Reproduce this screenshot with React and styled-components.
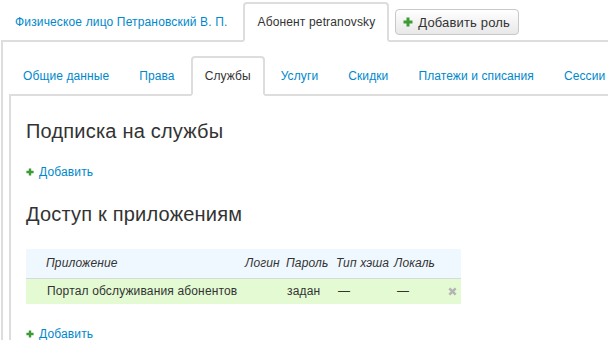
import React from "react";
import styled, { createGlobalStyle } from "styled-components";

const GlobalStyle = createGlobalStyle`
  html, body {
    margin: 0;
    padding: 0;
    overflow: hidden;
    background: #fff;
    font-family: "Liberation Sans", Arial, sans-serif;
    color: #333;
    letter-spacing: 0.15px;
  }
`;

const Page = styled.div`
  width: 760px;
  padding: 2px 0 0 1px;
`;

const TabBar = styled.div`
  display: flex;
  align-items: flex-start;
  margin-bottom: -2px;
  position: relative;
  z-index: 1;
`;

const Tab = styled.div`
  border: 2px solid transparent;
  border-radius: 4px 4px 0 0;
  padding: 10px 12px;
  line-height: 16px;
  font-size: 12px;
  margin-right: 2px;
  white-space: nowrap;
  letter-spacing: ${(p) => (p.$tight ? "0.1px" : "inherit")};
  color: ${(p) => (p.$active ? "#333" : "#0088cc")};
  background: ${(p) => (p.$active ? "#fff" : "transparent")};
  border-color: ${(p) => (p.$active ? "#ddd #ddd #fff #ddd" : "transparent")};
`;

const RoleButton = styled.button`
  margin: 7px 0 0 4px;
  height: 26px;
  padding: 0 8px 0 7px;
  display: flex;
  align-items: center;
  gap: 5px;
  font-family: inherit;
  letter-spacing: inherit;
  font-size: 13px;
  color: #333;
  border: 1px solid #c8c8c8;
  border-radius: 4px;
  background: linear-gradient(#ffffff, #e8e8e8);
  white-space: nowrap;
`;

const Panel = styled.div`
  border: 2px solid #ddd;
  border-right-color: transparent;
  padding: ${(p) => p.$pad};
  min-height: 400px;
`;

const Heading = styled.h2`
  margin: ${(p) => p.$mt || 0}px 0 0;
  font-size: 20px;
  line-height: 24px;
  font-weight: normal;
  letter-spacing: 0.2px;
  color: #333;
`;

const AddLink = styled.div`
  margin-top: ${(p) => p.$mt}px;
  display: flex;
  align-items: center;
  gap: 5px;
  font-size: 12px;
  line-height: 18px;
  color: #0088cc;
`;

const Table = styled.table`
  margin-top: 23px;
  width: 435px;
  border-collapse: collapse;
  table-layout: fixed;
  font-size: 12px;
`;

const HeadRow = styled.tr`
  background: #eff8fe;
  height: 29px;
  border-bottom: 1px solid #d3dbe0;
`;

const BodyRow = styled.tr`
  background: #e3fad3;
  height: 26px;
`;

const Th = styled.th`
  font-weight: normal;
  font-style: italic;
  text-align: left;
  padding: 0 0 0 ${(p) => p.$pl || 4}px;
  color: #333;
  white-space: nowrap;
`;

const Td = styled.td`
  padding: 0 0 0 ${(p) => p.$pl || 4}px;
  color: #333;
  white-space: nowrap;
`;

const Plus = ({ size = 8 }) => (
  <svg width={size} height={size} viewBox="0 0 10 10">
    <path d="M5 0.5V9.5M0.5 5H9.5" stroke="#3d9b35" strokeWidth="3" />
  </svg>
);

const Cross = () => (
  <svg width="9" height="9" viewBox="0 0 10 10" style={{ display: "block", margin: "0 auto" }}>
    <path d="M1.5 1.5L8.5 8.5M8.5 1.5L1.5 8.5" stroke="#b4b4b4" strokeWidth="2.8" />
  </svg>
);

const topTabs = [
  { label: "Физическое лицо Петрановский В. П." },
  { label: "Абонент petranovsky", active: true },
];

const innerTabs = [
  "Общие данные",
  "Права",
  "Службы",
  "Услуги",
  "Скидки",
  "Платежи и списания",
  "Сессии",
];

export default function App() {
  return (
    <>
      <GlobalStyle />
      <Page>
        <TabBar>
          {topTabs.map((t) => (
            <Tab key={t.label} $active={t.active}>
              {t.label}
            </Tab>
          ))}
          <RoleButton>
            <Plus size={10} />
            Добавить роль
          </RoleButton>
        </TabBar>
        <Panel $pad="14px 0 0 6px">
          <TabBar>
            {innerTabs.map((t) => (
              <Tab key={t} $tight $active={t === "Службы"}>
                {t}
              </Tab>
            ))}
          </TabBar>
          <Panel $pad="23px 0 0 15px">
            <Heading>Подписка на службы</Heading>
            <AddLink $mt={20}>
              <Plus />
              Добавить
            </AddLink>
            <Heading $mt={21}>Доступ к приложениям</Heading>
            <Table>
              <colgroup>
                <col style={{ width: 215 }} />
                <col style={{ width: 41 }} />
                <col style={{ width: 50 }} />
                <col style={{ width: 58 }} />
                <col style={{ width: 49 }} />
                <col style={{ width: 22 }} />
              </colgroup>
              <thead>
                <HeadRow>
                  <Th $pl={20}>Приложение</Th>
                  <Th>Логин</Th>
                  <Th>Пароль</Th>
                  <Th>Тип хэша</Th>
                  <Th>Локаль</Th>
                  <Th />
                </HeadRow>
              </thead>
              <tbody>
                <BodyRow>
                  <Td $pl={21}>Портал обслуживания абонентов</Td>
                  <Td />
                  <Td $pl={5}>задан</Td>
                  <Td $pl={6}>—</Td>
                  <Td $pl={7}>—</Td>
                  <Td $pl={0}>
                    <Cross />
                  </Td>
                </BodyRow>
              </tbody>
            </Table>
            <AddLink $mt={21}>
              <Plus />
              Добавить
            </AddLink>
          </Panel>
        </Panel>
      </Page>
    </>
  );
}
